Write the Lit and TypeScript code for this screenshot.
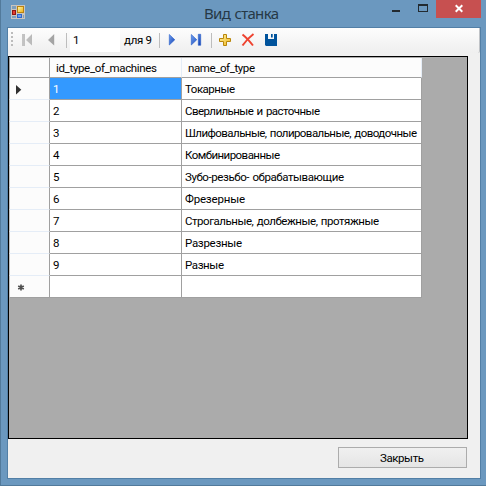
import { LitElement, html, css, svg } from "lit";
import { customElement } from "lit/decorators.js";

interface Row {
  id: string;
  name: string;
  width: number;
}

const ROWS: Row[] = [
  { id: "1", name: "Токарные", width: 50 },
  { id: "2", name: "Сверлильные и расточные", width: 135 },
  { id: "3", name: "Шлифовальные, полировальные, доводочные", width: 232 },
  { id: "4", name: "Комбинированные", width: 95 },
  { id: "5", name: "Зубо-резьбо- обрабатывающие", width: 159 },
  { id: "6", name: "Фрезерные", width: 60 },
  { id: "7", name: "Строгальные, долбежные, протяжные", width: 194 },
  { id: "8", name: "Разрезные", width: 57 },
  { id: "9", name: "Разные", width: 39 },
];

const gradients = svg`<defs>
  <linearGradient id="blue" x1="0" x2="1" y1="0" y2="1"><stop offset="0" stop-color="#6fa0f2"/><stop offset="1" stop-color="#123fb0"/></linearGradient>
  <linearGradient id="grey" x1="0" x2="1"><stop offset="0" stop-color="#c4c4c4"/><stop offset="1" stop-color="#a2a2a2"/></linearGradient>
  <linearGradient id="gold" x1="0" x2="1" y1="0" y2="1"><stop offset="0" stop-color="#fff3a0"/><stop offset="1" stop-color="#efb51e"/></linearGradient>
</defs>`;

@customElement("app-root")
export class AppRoot extends LitElement {
  static styles = css`
    :host {
      display: block;
      width: 486px;
      height: 486px;
      font: 11.5px/14px Roboto, "Liberation Sans", sans-serif;
      color: #000;
    }
    * { box-sizing: border-box; }
    svg { display: block; flex: none; }
    .window {
      height: 486px;
      background: #6b98bf;
      border: solid #527a9b;
      border-width: 0 0 1px 1px;
      display: grid;
      grid-template-rows: 27px 452px;
      padding-right: 5px;
    }
    .title { display: flex; height: 27px; }
    .app-icon { margin: 5px 0 0 10px; }
    .caption {
      width: 354px;
      padding: 3px 0 0 179px;
      height: 27px;
      font: 15px/20px "Noto Sans", "Open Sans", sans-serif;
      word-spacing: 1px;
      color: #263846;
      white-space: nowrap;
    }
    .controls { display: flex; height: 18px; margin-left: auto; }
    .close { background: #c75050; width: 45px; height: 18px; }
    .client {
      margin-left: 6px;
      width: 474px;
      height: 452px;
      border: 1px solid #527fa6;
      background: #f0f0f0;
    }
    .toolbar {
      height: 25px;
      display: flex;
      background: linear-gradient(#fdfdfd, #efefef);
      border-right: 1px solid #c0c3c7;
      border-bottom-right-radius: 2px;
    }
    .grip { margin: 4px 0 0 3px; }
    .position { width: 50px; height: 23px; margin: 1px 0 0 3px; background: #fff; padding: 4px 0 0 3px; flex: none; }
    .count { width: 35px; margin: 5px 0 0 4px; flex: none; white-space: nowrap; }
    .fit { display: inline-block; white-space: nowrap; }
    .grid {
      margin-top: 3px;
      width: 460px;
      height: 383px;
      border: 1px solid #000;
      background: #ababab;
      padding-top: 1px;
    }
    .row {
      display: grid;
      grid-template-columns: 41px 132px 240px;
      height: 22px;
      width: 413px;
      word-spacing: 1px;
    }
    .row > div { border: solid #a0a0a0; border-width: 0 1px 1px 0; background: #fff; padding: 4px 0 0 3px; white-space: nowrap; }
    .row > .head { background: #fcfcfc; border-left: 1px solid #c2c2c2; border-bottom-color: #e5edf7; padding: 0; display: flex; }
    .row > .selected { background: #3399ff; color: #fff; }
    .header { height: 20px; }
    .header > div { background: #fcfcfc; padding: 3px 0 0 6px; border-right-color: #e5edf7; }
    .header > .head { border-color: #a0a0a0; }
    .last > .head { border-bottom-color: #a0a0a0; }
    .footer { display: flex; justify-content: flex-end; padding: 8px 13px 0 0; }
    .button {
      width: 129px;
      height: 21px;
      border: 1px solid #acacac;
      background: linear-gradient(#f0f0f0, #e5e5e5);
      padding: 3px 0 0 41px;
    }
  `;

  firstUpdated() {
    this.renderRoot.querySelectorAll<HTMLElement>(".fit").forEach((el) => {
      const n = (el.textContent ?? "").length;
      const spacing = (Number(el.dataset.width) - el.getBoundingClientRect().width) / (n - 1);
      el.style.letterSpacing = `${spacing}px`;
    });
  }

  private label(text: string, width: number) {
    return html`<span class="fit" data-width=${width}>${text}</span>`;
  }

  private titleBar() {
    return html`<div class="title">
      <svg class="app-icon" width="14" height="14" viewBox="0 0 14 14" shape-rendering="crispEdges">
        ${gradients}
        <path fill="#c9c5bf" d="M0 0h14v14H0z"/>
        <path fill="#7f9fbb" d="M1 1h4v3H1zM1 11h4v2H1zM12 10h1v3h-1z"/>
        <path fill="#8e1712" d="M1 5h4v5H1z"/><path fill="#e33b2e" d="M2 6h2v3H2z"/>
        <path fill="#b98211" d="M6 1h7v7H6z"/><path fill="url(#gold)" d="M7 2h5v5H7z"/>
        <path fill="#2f67cd" d="M6 9h5v4H6z"/><path fill="#6ba0ef" d="M7 10h3v2H7z"/>
      </svg>
      <div class="caption">${this.label("Вид станка", 75)}</div>
      <div class="controls">
        <svg width="45" height="18" viewBox="0 0 45 18" shape-rendering="crispEdges"><path fill="#222a30" d="M1 10h8v2H1z"/><path fill="#222a30" fill-rule="evenodd" d="M27 4h10v8H27zM28 6v5h8V6z"/></svg>
        <svg class="close" viewBox="0 0 45 18"><path d="M19.700 5.300l6.600 6.400M26.300 5.300l-6.600 6.400" stroke="#fff" stroke-width="2"/></svg>
      </div>
    </div>`;
  }

  private toolbar() {
    return html`<div class="toolbar">
      <svg class="grip" width="3" height="16" shape-rendering="crispEdges"><path fill="#bcbcbc" d="M0 0h2v2H0zM0 4h2v2H0zM0 8h2v2H0zM0 12h2v2H0z"/></svg>
      <svg width="53" height="25" viewBox="14 28 53 25">
        ${gradients}
        <path fill="url(#grey)" d="M22 34h3v12h-3zM32 34v11.500L26 40zM54.200 34v11.500L48 40z"/>
        <path fill="#bdbdbd" d="M66 33h1v15h-1z"/>
      </svg>
      <div class="position">1</div>
      <div class="count">${this.label("для 9", 28)}</div>
      <svg width="120" height="25" viewBox="159 28 120 25">
        ${gradients}
        <path fill="#bdbdbd" d="M159 33h1v15h-1zM211 33h1v15h-1z"/>
        <path fill="url(#blue)" stroke="#265cc8" stroke-width=".6" d="M169.300 34.500v10.500l5.500-5.250z"/>
        <path fill="url(#blue)" stroke="#265cc8" stroke-width=".6" d="M191.300 34.500v10.500l5.500-5.250zM198.300 34.300h2.400v11h-2.400z"/>
        <path fill="url(#gold)" stroke="#b8860c" d="M223.500 34.500h3v4h4v3h-4v4h-3v-4h-4v-3h4z"/>
        <path fill="none" stroke="#ee4330" stroke-width="2" d="M242.500 34.500Q247 38 253 45.500M253.500 34Q248 38 242.500 45.500"/>
        <path fill="#00539c" fill-rule="evenodd" d="M265 34h12v12h-11l-1-1zM268 34v5h6v-5zM271 34h1.700v3.500h-1.700z"/>
      </svg>
    </div>`;
  }

  private row(r: Row, i: number) {
    return html`<div class="row">
      <div class="head">${i === 0 ? html`<svg width="20" height="21"><path fill="#303030" d="M6 7v9.500l5.300-4.750z"/></svg>` : ""}</div>
      <div class="${i === 0 ? "selected" : ""}">${r.id}</div>
      <div>${this.label(r.name, r.width)}</div>
    </div>`;
  }

  render() {
    return html`<div class="window">
      ${this.titleBar()}
      <div class="client">
        ${this.toolbar()}
        <div class="grid">
          <div class="row header">
            <div class="head"></div>
            <div>${this.label("id_type_of_machines", 101)}</div>
            <div>${this.label("name_of_type", 67)}</div>
          </div>
          ${ROWS.map((r, i) => this.row(r, i))}
          <div class="row last">
            <div class="head"><svg width="20" height="21"><path stroke="#505050" stroke-width="1.700" d="M11 8.500v6M8.200 10l5.600 3M13.800 10l-5.600 3"/></svg></div>
            <div></div><div></div>
          </div>
        </div>
        <div class="footer"><div class="button">${this.label("Закрыть", 44)}</div></div>
      </div>
    </div>`;
  }
}
